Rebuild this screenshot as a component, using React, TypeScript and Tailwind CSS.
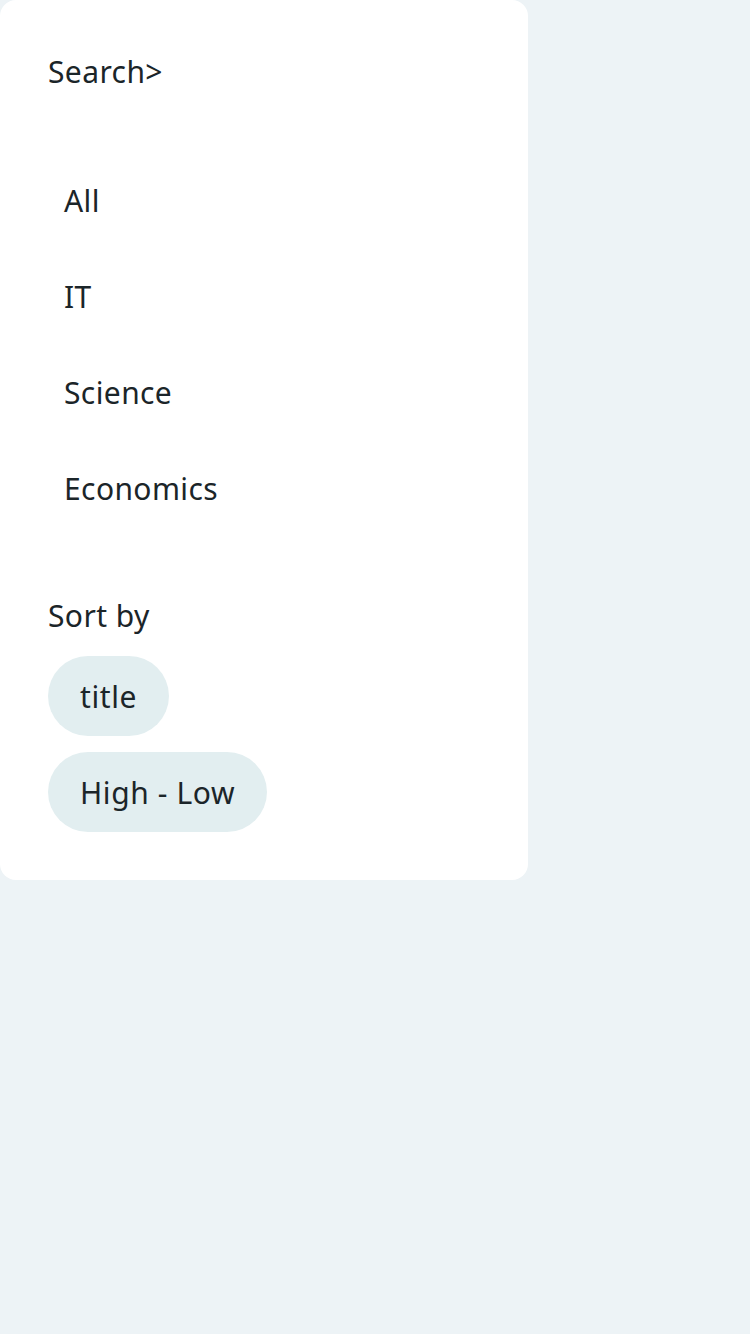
import React from 'react';

const categories = ['All', 'IT', 'Science', 'Economics'];
const sortOptions = ['title', 'High - Low'];

export default function App() {
  return (
    <div
      className="min-h-[1334px] w-[750px] bg-[#edf3f6] text-[#1b2529]"
      style={{ fontFamily: '"Noto Sans", "Open Sans", sans-serif' }}
    >
      <div className="flex w-[528px] flex-col rounded-2xl bg-white p-12 text-[30px] tracking-[0.4px]">
        <div className="leading-[48px]">Search&gt;</div>

        {/* Categories */}
        <div className="mt-14 flex flex-col">
          {categories.map((c) => (
            <div key={c} className="flex h-24 items-center px-4">
              {c}
            </div>
          ))}
        </div>

        {/* Sorting */}
        <div className="mt-14 leading-[48px]">Sort by</div>
        <div className="mt-4 flex flex-col items-start gap-4">
          {sortOptions.map((s) => (
            <button
              key={s}
              className="flex h-20 items-center rounded-full bg-[#e2eef0] px-8 tracking-[0.6px]"
            >
              {s}
            </button>
          ))}
        </div>
      </div>
    </div>
  );
}
